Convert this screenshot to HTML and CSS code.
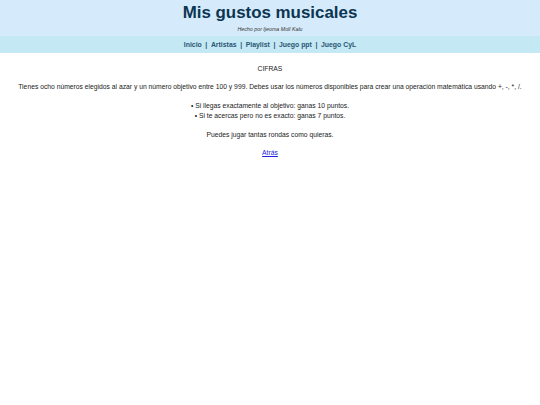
FILE: index.html
```html
<!DOCTYPE html>
<html lang="es">
<head>
<meta charset="utf-8">
<title>Mis gustos musicales</title>
<link rel="stylesheet" href="styles.css">
</head>
<body>
<header class="site-header">
  <h1 class="site-title">Mis gustos musicales</h1>
  <p class="site-credit">Hecho por Ijeoma Moll Kalu</p>
</header>
<nav class="site-nav">
  <a href="#">Inicio</a><span class="sep">|</span><a href="#">Artistas</a><span class="sep">|</span><a href="#">Playlist</a><span class="sep">|</span><a href="#">Juego ppt</a><span class="sep">|</span><a href="#">Juego CyL</a>
</nav>
<main class="content">
  <p>CIFRAS</p>
  <p>Tienes ocho números elegidos al azar y un número objetivo entre 100 y 999. Debes usar los números disponibles para crear una operación matemática usando +, -, *, /.</p>
  <p>• Si llegas exactamente al objetivo: ganas 10 puntos.<br>• Si te acercas pero no es exacto: ganas 7 puntos.</p>
  <p>Puedes jugar tantas rondas como quieras.</p>
  <p><a class="back" href="#">Atrás</a></p>
</main>
</body>
</html>
```
FILE: styles.css
```css
html, body {
  margin: 0;
  padding: 0;
  background: #ffffff;
}
body {
  font-family: "Liberation Sans", Arial, sans-serif;
  font-size: 6.75px;
  line-height: 10px;
  color: #222;
}
.site-header {
  background: #d5ebfb;
  text-align: center;
  padding: 2px 0 3px;
}
.site-title {
  margin: 0;
  font-size: 16.9px;
  line-height: 21px;
  font-weight: bold;
  color: #0c3552;
}
.site-credit {
  margin: 3px 0 0;
  font-size: 5.3px;
  line-height: 7px;
  font-style: italic;
  color: #333;
}
.site-nav {
  background: #c4e8f4;
  text-align: center;
  height: 17px;
  line-height: 17px;
  font-size: 6.9px;
  font-weight: bold;
}
.site-nav a {
  color: #2a5673;
  text-decoration: none;
}
.site-nav .sep {
  color: #2a5673;
  margin: 0 3.6px;
}
.content {
  text-align: center;
  padding: 2px 8px 0;
}
.content p {
  margin: 8.7px 0;
}
.back {
  color: #2222dd;
  text-decoration: underline;
}
```
